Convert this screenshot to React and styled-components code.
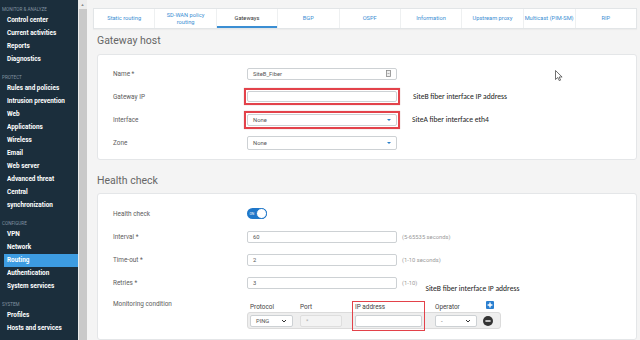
import React from 'react';
import styled, { createGlobalStyle } from 'styled-components';

const GlobalStyle = createGlobalStyle`
  html, body {
    margin: 0;
    padding: 0;
    background: #f4f4f4;
  }
  body {
    font-family: Roboto, "Open Sans", "Liberation Sans", sans-serif;
  }
  #root {
    width: 640px;
    height: 340px;
    overflow: hidden;
  }
`

const Page = styled.div`
  position: relative;
  display: flex;
  width: 640px;
  height: 340px;
  overflow: hidden;
  background: #f4f4f4;
`
const Sidebar = styled.nav`
  width: 78px;
  flex: none;
  display: flex;
  flex-direction: column;
  background: #1b2e3c;
  color: #fff;
`
const SectionTitle = styled.div`
  margin-top: ${props => props.first ? 6 : 8}px;
  height: 8px;
  line-height: 8px;
  padding-left: 2px;
  font-size: 4.6px;
  color: #8192a0;
  text-transform: uppercase;
  white-space: nowrap;
`
const NavItem = styled.div`
  margin-left: 4px;
  padding-left: 3px;
  line-height: 13px;
  font-size: 6.4px;
  font-weight: 700;
  white-space: nowrap;
  background: ${props => props.active ? '#3d9ce2' : 'transparent'};
`
const ScrollTrack = styled.div`
  width: 9px;
  flex: none;
  display: flex;
  flex-direction: column;
  align-items: center;
  background: #ececec;
`
const ScrollArrow = styled.div`
  height: 9px;
  line-height: 9px;
  font-size: 4px;
  color: #888;
`
const ScrollThumb = styled.div`
  flex: 1;
  width: 8px;
  background: #c9c9c9;
`
const Main = styled.main`
  flex: 1;
  min-width: 0;
  display: flex;
  flex-direction: column;
  padding: 8px 3px 0 6px;
`
const TabBar = styled.div`
  display: flex;
  height: 21px;
  box-sizing: border-box;
  background: #fff;
  border: 1px solid #e2e5e7;
  box-shadow: 0 1px 1px rgba(0, 0, 0, .03);
`
const Tab = styled.div`
  flex: 1;
  display: flex;
  align-items: center;
  justify-content: center;
  text-align: center;
  padding: 0 ${props => props.narrow ? 1 : 6}px;
  font-size: 5.7px;
  line-height: 6.6px;
  white-space: ${props => props.narrow ? 'nowrap' : 'normal'};
  color: ${props => props.active ? '#333' : '#3a8ed3'};
  border-left: ${props => props.first ? 'none' : '1px solid #eef0f1'};
  box-shadow: ${props => props.active ? 'inset 0 -2px 0 #3a8ed3' : 'none'};
`
const Heading = styled.h2`
  margin: 0 0 0 4px;
  padding-top: ${props => props.spaced ? 8 : 0}px;
  height: 25px;
  line-height: ${props => props.spaced ? 25 : 23}px;
  font-size: 10.5px;
  font-weight: 400;
  color: #666;
`
const Panel = styled.section`
  margin-left: 4px;
  background: #fff;
  border: 1px solid #e4e6e8;
  border-radius: 3px;
  padding: ${props => props.pad};
`
const Row = styled.div`
  display: flex;
  align-items: center;
  height: 23px;
  padding-left: 15px;
`
const Label = styled.div`
  width: 134px;
  flex: none;
  font-size: 6.4px;
  color: #5c5c5c;
`
const Controls = styled.div`
  display: flex;
  align-items: center;
  height: 100%;
`
const Field = styled.div`
  width: ${props => props.w || 150}px;
  height: ${props => props.h || 12}px;
  box-sizing: border-box;
  display: flex;
  align-items: center;
  justify-content: space-between;
  padding: 0 5px;
  background: ${props => props.disabled ? '#f3f3f3' : '#fff'};
  border: 1px solid ${props => props.disabled ? '#dedede' : '#cdd1d4'};
  border-radius: 2px;
  font-size: 5.8px;
  color: #555;
`
const Highlight = styled.div`
  margin-left: -3px;
  padding: 1px;
  border: 2px solid #e3424a;
  box-shadow: 0 0 1px rgba(120, 0, 0, .35);
`
const Caret = styled.span`
  width: 0;
  height: 0;
  border-left: 2.5px solid transparent;
  border-right: 2.5px solid transparent;
  border-top: 2.5px solid #2a7fc8;
`
const Chevron = styled.svg`
  width: 6px;
  height: 4px;
`
const Note = styled.span`
  margin-left: ${props => props.gap}px;
  align-self: ${props => props.low ? 'flex-end' : 'center'};
  line-height: 10px;
  font-family: "Liberation Sans Narrow", Carlito, "Liberation Sans", sans-serif;
  font-size: 7.6px;
  color: #222;
  white-space: nowrap;
`
const Hint = styled.span`
  margin-left: 5px;
  font-size: 5.8px;
  color: #9a9a9a;
  white-space: nowrap;
`
const Toggle = styled.div`
  width: 20px;
  height: 11px;
  box-sizing: border-box;
  display: flex;
  align-items: center;
  justify-content: space-between;
  padding-left: 2.5px;
  border-radius: 6px;
  background: #1f77c9;
  font-size: 3.4px;
  color: #fff;
`
const Knob = styled.span`
  width: 11px;
  height: 11px;
  box-sizing: border-box;
  border-radius: 50%;
  background: #fff;
  border: 1px solid #1f77c9;
`
const MonitorRow = styled.div`
  display: flex;
  align-items: flex-start;
  padding-left: 15px;
`
const MonitorLabel = styled(Label)`
  padding-top: 6px;
`
const CondTable = styled.div`
  display: grid;
  grid-template-columns: 50px 55px 80px 48px 21px;
  grid-template-rows: 11px 17px;
  width: 254px;
  margin-top: 7px;
`
const CondHead = styled.div`
  grid-row: 1;
  grid-column: ${props => props.col};
  align-self: center;
  padding-left: 3px;
  font-size: 6.4px;
  color: #444;
`
const CondBack = styled.div`
  grid-row: 2;
  grid-column: 1 / -1;
  background: #eeeeee;
  border: 1px solid #dbdbdb;
  border-radius: 3px;
`
const Cell = styled.div`
  grid-row: 2;
  grid-column: ${props => props.col};
  display: flex;
  align-items: center;
  padding-left: 3px;
`
const RedFrame = styled.div`
  grid-row: 1 / 3;
  grid-column: 3;
  width: 73px;
  margin-bottom: -2px;
  box-sizing: border-box;
  border: 1.5px solid #e3424a;
`
const PlusIcon = styled.svg`
  grid-row: 1;
  grid-column: 5;
  align-self: start;
  margin-left: 6px;
  width: 8px;
  height: 8px;
`
const MinusIcon = styled.svg`
  width: 10px;
  height: 10px;
`
const Cursor = styled.svg`
  position: absolute;
  left: 555px;
  top: 70px;
  width: 8px;
  height: 11px;
`

const tabs = ['Static routing', 'SD-WAN policy routing', 'Gateways', 'BGP', 'OSPF', 'Information', 'Upstream proxy', 'Multicast (PIM-SM)', 'RIP']

const Down = () => (
  <Chevron viewBox="0 0 6 4">
    <path d="M1 1l2 2 2-2" fill="none" stroke="#333" strokeWidth="1" />
  </Chevron>
)

export default function App() {
  return (
    <Page>
      <GlobalStyle />
      <Sidebar>
        <SectionTitle first>Monitor &amp; analyze</SectionTitle>
        <NavItem>Control center</NavItem>
        <NavItem>Current activities</NavItem>
        <NavItem>Reports</NavItem>
        <NavItem>Diagnostics</NavItem>
        <SectionTitle>Protect</SectionTitle>
        <NavItem>Rules and policies</NavItem>
        <NavItem>Intrusion prevention</NavItem>
        <NavItem>Web</NavItem>
        <NavItem>Applications</NavItem>
        <NavItem>Wireless</NavItem>
        <NavItem>Email</NavItem>
        <NavItem>Web server</NavItem>
        <NavItem>Advanced threat</NavItem>
        <NavItem>Central<br />synchronization</NavItem>
        <SectionTitle>Configure</SectionTitle>
        <NavItem>VPN</NavItem>
        <NavItem>Network</NavItem>
        <NavItem active>Routing</NavItem>
        <NavItem>Authentication</NavItem>
        <NavItem>System services</NavItem>
        <SectionTitle>System</SectionTitle>
        <NavItem>Profiles</NavItem>
        <NavItem>Hosts and services</NavItem>
      </Sidebar>
      <ScrollTrack>
        <ScrollArrow>▲</ScrollArrow>
        <ScrollThumb />
      </ScrollTrack>
      <Main>
        <TabBar>
          {tabs.map((t, i) => (
            <Tab key={t} first={i === 0} active={t === 'Gateways'} narrow={t.startsWith('Multicast')}>{t}</Tab>
          ))}
        </TabBar>

        <Heading>Gateway host</Heading>
        <Panel pad="7px 0 5px">
          <Row>
            <Label>Name *</Label>
            <Controls>
              <Field>
                SiteB_Fiber
                <svg width="5" height="7" viewBox="0 0 5 7">
                  <rect x="0.5" y="0.5" width="4" height="6" fill="#eee" stroke="#888" strokeWidth="0.8" />
                  <path d="M1.5 3.5h2" stroke="#888" strokeWidth="0.6" />
                </svg>
              </Field>
            </Controls>
          </Row>
          <Row>
            <Label>Gateway IP</Label>
            <Controls>
              <Highlight><Field h={11} /></Highlight>
              <Note gap={13}>SiteB fiber interface IP address</Note>
            </Controls>
          </Row>
          <Row>
            <Label>Interface</Label>
            <Controls>
              <Highlight><Field>None<Caret /></Field></Highlight>
              <Note gap={12}>SiteA fiber interface eth4</Note>
            </Controls>
          </Row>
          <Row>
            <Label>Zone</Label>
            <Controls>
              <Field h={14}>None<Caret /></Field>
            </Controls>
          </Row>
        </Panel>

        <Heading spaced>Health check</Heading>
        <Panel pad="8px 0 10px">
          <Row>
            <Label>Health check</Label>
            <Controls>
              <Toggle>ON<Knob /></Toggle>
            </Controls>
          </Row>
          <Row>
            <Label>Interval *</Label>
            <Controls>
              <Field>60</Field>
              <Hint>(5-65535 seconds)</Hint>
            </Controls>
          </Row>
          <Row>
            <Label>Time-out *</Label>
            <Controls>
              <Field>2</Field>
              <Hint>(1-10 seconds)</Hint>
            </Controls>
          </Row>
          <Row>
            <Label>Retries *</Label>
            <Controls>
              <Field>3</Field>
              <Hint>(1-10)</Hint>
              <Note gap={8} low>SiteB fiber interface IP address</Note>
            </Controls>
          </Row>
          <MonitorRow>
            <MonitorLabel>Monitoring condition</MonitorLabel>
            <CondTable>
              <CondHead col={1}>Protocol</CondHead>
              <CondHead col={2}>Port</CondHead>
              <CondHead col={3}>IP address</CondHead>
              <CondHead col={4}>Operator</CondHead>
              <PlusIcon viewBox="0 0 8 8">
                <rect width="8" height="8" rx="1" fill="#2a7fd0" />
                <path d="M4 1.6v4.8M1.6 4h4.8" stroke="#fff" strokeWidth="1.4" />
              </PlusIcon>
              <CondBack />
              <Cell col={1}>
                <Field w={43} h={12}>PING<Down /></Field>
              </Cell>
              <Cell col={2}>
                <Field w={42} h={12} disabled>
                  <span style={{ color: '#aaa' }}>*</span><span />
                </Field>
              </Cell>
              <Cell col={3}>
                <Field w={67} h={12} />
              </Cell>
              <Cell col={4}>
                <Field w={42} h={12}>-<Down /></Field>
              </Cell>
              <Cell col={5}>
                <MinusIcon viewBox="0 0 10 10">
                  <circle cx="5" cy="5" r="5" fill="#333" />
                  <path d="M2.4 5h5.2" stroke="#fff" strokeWidth="1.4" />
                </MinusIcon>
              </Cell>
              <RedFrame />
            </CondTable>
          </MonitorRow>
        </Panel>
      </Main>
      <Cursor viewBox="0 0 8 11">
        <path d="M0.5 0.5v9l2.2-2 1.6 3.2 1.3-.6-1.5-3.1h3z" fill="#fff" stroke="#333" strokeWidth="0.7" strokeLinejoin="round" />
      </Cursor>
    </Page>
  );
}
